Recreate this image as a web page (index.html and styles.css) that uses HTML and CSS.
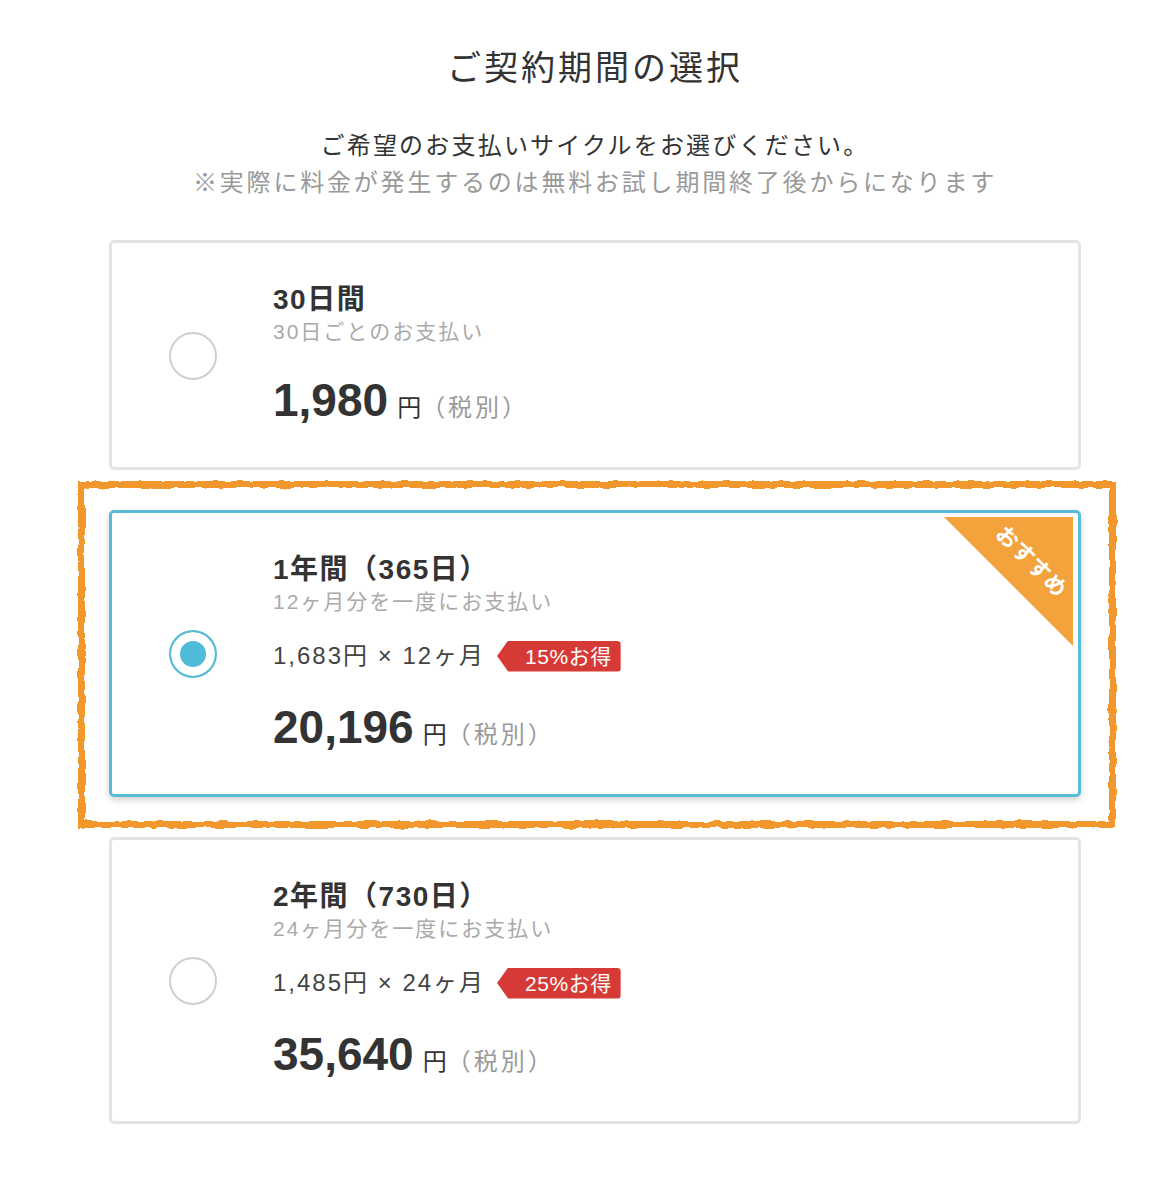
FILE: index.html
```html
<!DOCTYPE html>
<html lang="ja">
  <head>
    <meta charset="UTF-8" />
    <meta name="viewport" content="width=device-width, initial-scale=1.0" />
    <title>ご契約期間の選択</title>
    <link rel="stylesheet" href="styles.css">
  </head>
  <body>
    <svg class="svg-defs" width="0" height="0" aria-hidden="true">
      <filter id="rough">
        <feTurbulence type="fractalNoise" baseFrequency="0.09" numOctaves="2" seed="3" result="noise" />
        <feDisplacementMap in="SourceGraphic" in2="noise" scale="5" xChannelSelector="R" yChannelSelector="G" />
      </filter>
    </svg>

    <main class="plan-page">
      <h1 class="page-title">ご契約期間の選択</h1>
      <p class="lead">
        ご希望のお支払いサイクルをお選びください。<br />
        <span class="lead-note">※実際に料金が発生するのは無料お試し期間終了後からになります</span>
      </p>

      <div class="plans">
        <label class="plan">
          <span class="radio"></span>
          <div class="plan-body">
            <div class="plan-name">30日間</div>
            <div class="plan-desc">30日ごとのお支払い</div>
            <div class="plan-price"><span class="amount">1,980</span><span class="yen">円</span><span class="tax">（税別）</span></div>
          </div>
        </label>

        <div class="featured">
          <label class="plan plan-selected">
            <span class="radio"></span>
            <div class="plan-body">
              <div class="plan-name">1年間（365日）</div>
              <div class="plan-desc">12ヶ月分を一度にお支払い</div>
              <div class="plan-unit">
                <span class="unit-text">1,683円 × 12ヶ月</span>
                <span class="discount">15%お得</span>
              </div>
              <div class="plan-price"><span class="amount">20,196</span><span class="yen">円</span><span class="tax">（税別）</span></div>
            </div>
            <span class="ribbon"><span class="ribbon-text">おすすめ</span></span>
          </label>
        </div>

        <label class="plan">
          <span class="radio"></span>
          <div class="plan-body">
            <div class="plan-name">2年間（730日）</div>
            <div class="plan-desc">24ヶ月分を一度にお支払い</div>
            <div class="plan-unit">
              <span class="unit-text">1,485円 × 24ヶ月</span>
              <span class="discount">25%お得</span>
            </div>
            <div class="plan-price"><span class="amount">35,640</span><span class="yen">円</span><span class="tax">（税別）</span></div>
          </div>
        </label>
      </div>
    </main>
  </body>
</html>
```

FILE: styles.css
```css
* {
  box-sizing: border-box;
}
body {
  margin: 0;
  background: #fff;
  color: #333;
  font-family: "Liberation Sans", "Noto Sans CJK JP", sans-serif;
}
.svg-defs {
  position: absolute;
  width: 0;
  height: 0;
}
.plan-page {
  width: 972px;
  margin-left: 109px;
  padding-top: 44px;
}
.page-title {
  margin: 0;
  text-align: center;
  font-size: 34px;
  line-height: 48px;
  font-weight: normal;
  letter-spacing: 3px;
  color: #333;
}
.lead {
  margin: 35px 0 0;
  text-align: center;
  font-size: 24px;
  line-height: 37px;
  letter-spacing: 2.2px;
  color: #333;
}
.lead-note {
  color: #999;
  letter-spacing: 2.8px;
}

.plans {
  margin-top: 39px;
  display: flex;
  flex-direction: column;
  gap: 40px;
}
.plan {
  position: relative;
  display: flex;
  align-items: center;
  padding: 40px 0 39px 57px;
  border: 3px solid #e4e4e4;
  border-radius: 5px;
  background: #fff;
  cursor: pointer;
}
.plan-selected {
  border-color: #58bcd7;
  box-shadow: 0 3px 7px rgba(0, 0, 0, 0.18);
}
.radio {
  flex: none;
  width: 48px;
  height: 48px;
  border: 2px solid #cfcfcf;
  border-radius: 50%;
  background: #fff;
}
.plan-selected .radio {
  border-color: #58bcd7;
  background: #4fbbd9;
  box-shadow: inset 0 0 0 9px #fff;
}
.plan-body {
  margin-left: 56px;
}
.plan-name {
  font-size: 28px;
  line-height: 34px;
  font-weight: bold;
  letter-spacing: 1.5px;
  color: #333;
}
.plan-desc {
  font-size: 21px;
  line-height: 30px;
  letter-spacing: 2px;
  color: #aaa;
}
.plan-unit {
  margin-top: 21px;
  height: 36px;
  display: flex;
  align-items: center;
  white-space: nowrap;
}
.unit-text {
  font-size: 24px;
  line-height: 36px;
  letter-spacing: 2px;
  color: #444;
}
.discount {
  margin-left: 12px;
  height: 31px;
  padding: 0 9px 0 28px;
  font-size: 21px;
  line-height: 31px;
  letter-spacing: 0.5px;
  color: #fff;
  background: #d63a36;
  border-radius: 0 4px 4px 0;
  clip-path: polygon(0 50%, 11px 0, 100% 0, 100% 100%, 11px 100%);
}
.plan-price {
  margin-top: 25px;
  font-size: 46px;
  line-height: 56px;
  white-space: nowrap;
}
.amount {
  font-weight: bold;
  color: #333;
}
.yen {
  margin-left: 9px;
  font-size: 24px;
  line-height: 1;
  color: #333;
}
.tax {
  font-size: 24px;
  line-height: 1;
  letter-spacing: 3px;
  color: #999;
}

/* corner ribbon */
.ribbon {
  position: absolute;
  top: 4px;
  right: 5px;
  width: 129px;
  height: 129px;
  background: #f4a23b;
  clip-path: polygon(0 0, 100% 0, 100% 100%);
}
.ribbon-text {
  position: absolute;
  left: 87px;
  top: 45px;
  transform: translate(-50%, -50%) rotate(45deg);
  font-size: 22px;
  font-weight: bold;
  line-height: 1;
  letter-spacing: 0.5px;
  color: #fff;
  white-space: nowrap;
}

/* hand-drawn highlight around the recommended plan */
.featured {
  position: relative;
}
.featured::after {
  content: "";
  position: absolute;
  top: -29px;
  left: -31px;
  right: -35px;
  bottom: -31px;
  border: 7px solid #f2962f;
  filter: url(#rough);
  pointer-events: none;
}
```
